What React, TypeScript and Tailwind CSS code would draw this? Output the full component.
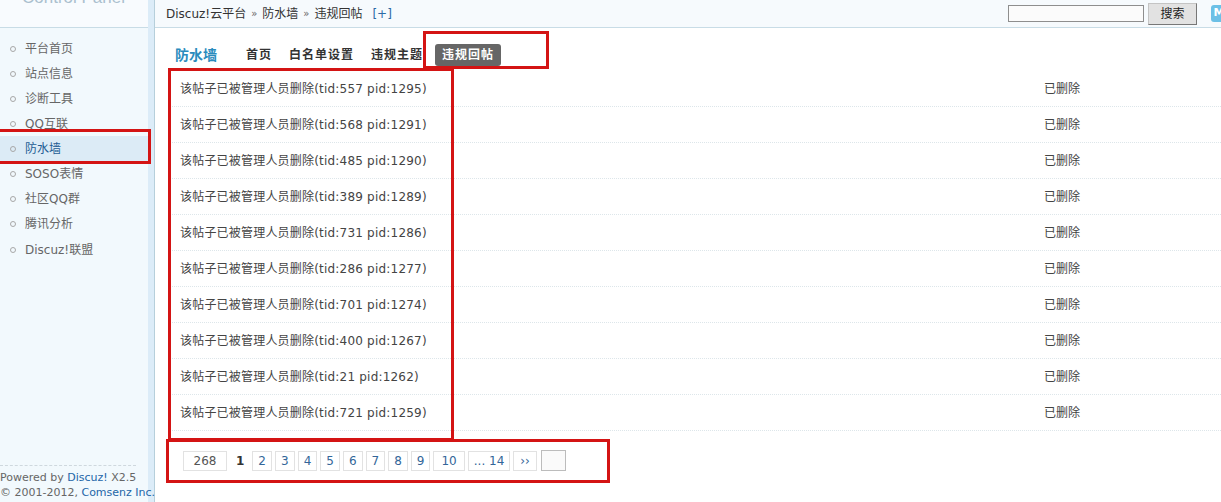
import React from 'react';

const menu = ['平台首页', '站点信息', '诊断工具', 'QQ互联', '防水墙', 'SOSO表情', '社区QQ群', '腾讯分析', 'Discuz!联盟'];

const rows = [
  [557, 1295],
  [568, 1291],
  [485, 1290],
  [389, 1289],
  [731, 1286],
  [286, 1277],
  [701, 1274],
  [400, 1267],
  [21, 1262],
  [721, 1259],
];

const pages = [
  { t: '2', px: 'px-[5px]' },
  { t: '3', px: 'px-[5px]' },
  { t: '4', px: 'px-[5px]' },
  { t: '5', px: 'px-[5px]' },
  { t: '6', px: 'px-[5px]' },
  { t: '7', px: 'px-[5px]' },
  { t: '8', px: 'px-[5px]' },
  { t: '9', px: 'px-[5px]' },
  { t: '10', px: 'px-[7px]' },
  { t: '... 14', px: 'px-[5px]' },
  { t: '››', px: 'px-[6px]' },
];

export default function App() {
  return (
    <div
      className="relative flex h-[502px] w-[1221px] overflow-hidden bg-white text-[12px] text-[#333]"
      style={{ fontFamily: '"DejaVu Sans", "Noto Sans CJK SC", sans-serif' }}
    >
      {/* sidebar */}
      <div className="flex w-[155px] shrink-0 border-r border-[#b6cfdb]">
        <div className="flex w-[148px] flex-col bg-[#f2f9fd]">
          <div className="h-[28px] overflow-hidden border-b border-[#c8dce6] bg-[#f8fbfe]">
            <div className="mt-[-11px] pl-[22px] text-[17px] leading-[17px] text-[#aabfce]" style={{ fontFamily: '"Liberation Sans", sans-serif' }}>
              Control Panel
            </div>
          </div>
          <ul className="pt-[8px]">
            {menu.map((m, i) => (
              <li
                key={m}
                className={`flex h-[25px] items-center ${i === 8 ? 'mt-[1px]' : ''} ${
                  m === '防水墙' ? 'bg-[#dcebf6] text-[#1f5d94]' : 'text-[#666]'
                }`}
              >
                <span className="ml-[10px] mr-[9px] h-[6px] w-[6px] rounded-full border border-[#a8a8a8]" />
                {m}
              </li>
            ))}
          </ul>
          <div className="relative z-10 mt-auto mb-[2px]">
            <div className="mb-[4px] w-[136px] border-t border-dashed border-[#cfd8de]" />
            <div className="text-[11px] leading-[15px] text-[#666] whitespace-nowrap">
              Powered by <span className="text-[#2366a8]">Discuz!</span> X2.5
            </div>
            <div className="text-[11px] leading-[15px] text-[#666] whitespace-nowrap">
              © 2001-2012, <span className="text-[#2366a8]">Comsenz Inc.</span>
            </div>
          </div>
        </div>
        <div className="w-[6px] bg-[#dcecf8]" />
      </div>

      {/* main */}
      <div className="flex min-w-0 flex-1 flex-col">
        <div className="flex h-[28px] shrink-0 items-center border-b border-[#c8dce6] bg-[#f6fafd] pl-[11px]">
          <span className="text-[#333]">Discuz!云平台</span>
          <span className="mx-[5px] text-[10px] text-[#666]">»</span>
          <span>防水墙</span>
          <span className="mx-[5px] text-[10px] text-[#666]">»</span>
          <span>违规回帖</span>
          <span className="ml-[10px] text-[#2b6aa6]">[+]</span>
          <div className="ml-auto mr-[-6px] flex shrink-0 items-center">
            <input className="h-[17px] w-[136px] border border-[#8e8e8e] bg-[#fbfbfb]" />
            <button className="ml-[4px] h-[22px] w-[49px] border border-[#c4c4c4] border-r-[#777] border-b-[#777] bg-[#e2e2e2] text-[12px] text-[#222]">
              搜索
            </button>
            <div className="ml-[14px] flex h-[17px] w-[16px] items-center justify-center rounded-[3px] bg-[#6cc0e6] text-[11px] font-bold text-white">
              M
            </div>
          </div>
        </div>

        <div className="flex flex-col pl-[15px]">
          <div className="mt-[17px] flex h-[20px] items-center">
            <span className="ml-[5px] text-[14px] font-bold text-[#2a8bbd]">防水墙</span>
            <span className="ml-[29px] font-bold tracking-[1px] text-[#333]">首页</span>
            <span className="ml-[17px] font-bold tracking-[1px] text-[#333]">白名单设置</span>
            <span className="ml-[17px] font-bold tracking-[1px] text-[#333]">违规主题</span>
            <span className="ml-[12px] rounded-[3px] bg-[#666] px-[7px] py-[2px] font-bold tracking-[1px] text-white">违规回帖</span>
          </div>

          <div className="mt-[6px]">
            {rows.map(([tid, pid]) => (
              <div key={pid} className="flex h-[36px] items-center border-b border-dotted border-[#dde6ea] pl-[10px]">
                <div className="w-[864px] tracking-[0.2px] text-[#444]">
                  该帖子已被管理人员删除(tid:{tid} pid:{pid})
                </div>
                <div className="text-[#444]">已删除</div>
              </div>
            ))}
          </div>

          <div className="mt-[19px] flex items-center pl-[13px] text-[#336699]">
            <span className="flex h-[20px] w-[44px] items-center justify-center border border-[#e2e2e2] text-[#555]">268</span>
            <span className="ml-[9px] mr-[8px] font-bold text-[#333]">1</span>
            {pages.map((p) => (
              <span key={p.t} className={`mr-[3px] flex h-[20px] items-center border border-[#e2e2e2] ${p.px}`}>
                {p.t}
              </span>
            ))}
            <span className="ml-[1px] h-[21px] w-[25px] border border-[#bcbcbc] bg-[#fafafa]" />
          </div>
        </div>
      </div>

      {/* red annotation boxes */}
      <div className="pointer-events-none absolute left-[-3px] top-[129px] h-[35px] w-[154px] border-[3px] border-[#d41414]" />
      <div className="pointer-events-none absolute left-[423px] top-[31px] h-[38px] w-[126px] border-[3px] border-[#d41414]" />
      <div className="pointer-events-none absolute left-[168px] top-[68px] h-[373px] w-[286px] border-[3px] border-[#d41414]" />
      <div className="pointer-events-none absolute left-[166px] top-[439px] h-[44px] w-[444px] border-[3px] border-[#d41414]" />
    </div>
  );
}
